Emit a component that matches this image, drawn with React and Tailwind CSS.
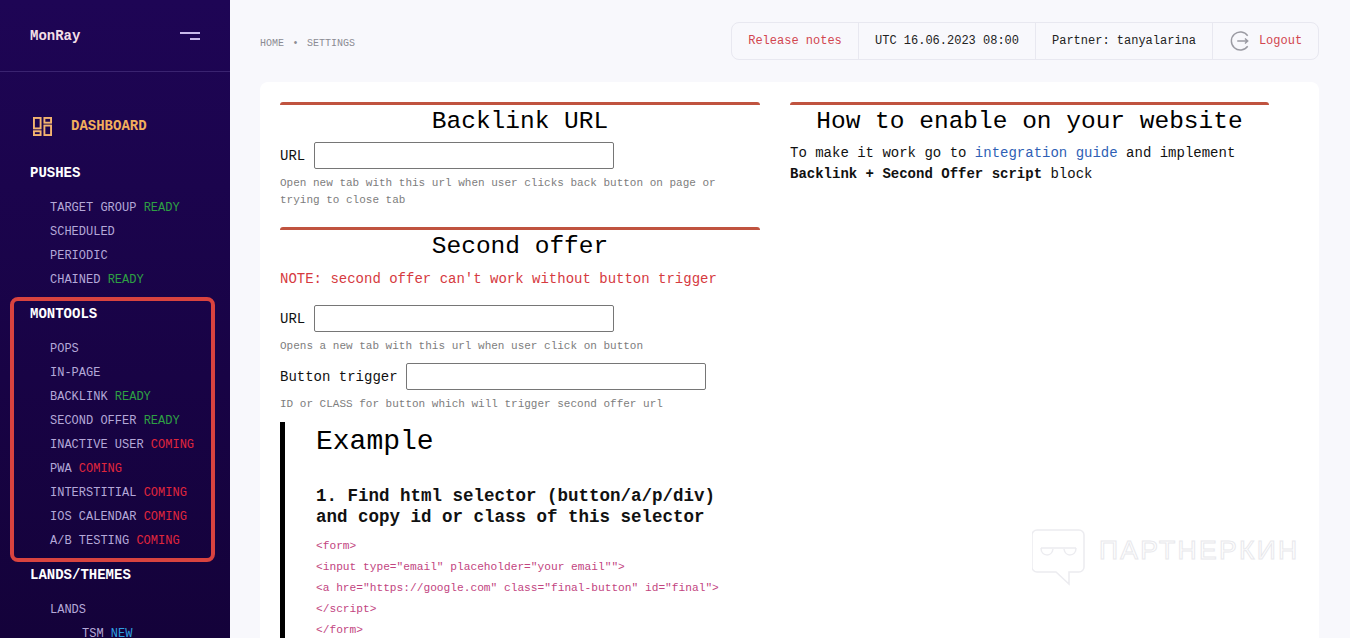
import React from "react";

const mono = "font-['Liberation_Mono',monospace]";

// sidebar groups
const PUSHES = [
    { name: "TARGET GROUP", tag: "READY" },
    { name: "SCHEDULED" },
    { name: "PERIODIC" },
    { name: "CHAINED", tag: "READY" },
];

const MONTOOLS = [
    { name: "POPS" },
    { name: "IN-PAGE" },
    { name: "BACKLINK", tag: "READY" },
    { name: "SECOND OFFER", tag: "READY" },
    { name: "INACTIVE USER", tag: "COMING" },
    { name: "PWA", tag: "COMING" },
    { name: "INTERSTITIAL", tag: "COMING" },
    { name: "IOS CALENDAR", tag: "COMING" },
    { name: "A/B TESTING", tag: "COMING" },
];

const CODE = [
    "<form>",
    '<input type="email" placeholder="your email"">',
    '<a hre="https://google.com" class="final-button" id="final">',
    "</script>",
    "</form>",
];

function Tag({ tag }) {
    if (tag === "READY") return <span className="text-[#2ea043]">READY</span>;
    if (tag === "NEW") return <span className="text-[#2f9fe0]">NEW</span>;
    return <span className="text-[#e0263c]">COMING</span>;
}

function NavItem({ item }) {
    return (
        <div className="h-6 leading-6 text-xs text-[#b4a8d8] whitespace-pre pl-5">
            {item.name}
            {item.tag && " "}
            {item.tag && <Tag tag={item.tag} />}
        </div>
    );
}

function DashboardIcon() {
    return (
        <svg width="19" height="19" viewBox="0 0 20 20" fill="none" stroke="#f3b36f" strokeWidth="2">
            <rect x="1" y="1" width="7" height="11" />
            <rect x="12" y="1" width="7" height="5" />
            <rect x="1" y="15" width="7" height="4" />
            <rect x="12" y="9" width="7" height="10" />
        </svg>
    );
}

function LogoutIcon() {
    return (
        <svg width="22" height="22" viewBox="0 0 20 20" fill="none" stroke="#9a9aa2" strokeWidth="1.3">
            <path d="M17 5.2A8.2 8.2 0 1 0 17 14.8" />
            <path d="M7.5 10H17M14.5 7.8 17 10l-2.5 2.2" />
        </svg>
    );
}

function Sidebar() {
    return (
        <aside className="w-[230px] shrink-0 h-full overflow-hidden bg-gradient-to-b from-[#1e0555] to-[#14023a]">
            <div className="h-[72px] border-b border-[#3a2370] pl-[30px] pr-[30px] flex items-center justify-between">
                <span className="text-sm text-[#f3dfe6] font-semibold">MonRay</span>
                <div className="flex flex-col items-end gap-1">
                    <div className="w-5 h-0.5 bg-[#c9b8ea]" />
                    <div className="w-[10px] h-0.5 bg-[#c9b8ea]" />
                </div>
            </div>

            <div className="mt-[42px] pl-[33px] flex items-center gap-[19px] h-6">
                <DashboardIcon />
                <span className="text-sm font-bold text-[#f2ae5c]">DASHBOARD</span>
            </div>

            <div className="pl-[30px] mt-[23px]">
                <div className="h-6 leading-6 text-sm font-bold text-white">PUSHES</div>
                <div className="mt-[11px]">
                    {PUSHES.map((item) => <NavItem key={item.name} item={item} />)}
                </div>
            </div>

            <div className="ml-[10px] w-[205px] mt-[5px] border-4 border-[#d9433f] rounded-lg pl-4 pt-px pb-[5px]">
                <div className="h-6 leading-6 text-sm font-bold text-white">MONTOOLS</div>
                <div className="mt-[11px]">
                    {MONTOOLS.map((item) => <NavItem key={item.name} item={item} />)}
                </div>
            </div>

            <div className="pl-[30px] mt-[1px]">
                <div className="h-6 leading-6 text-sm font-bold text-white">LANDS/THEMES</div>
                <div className="mt-[11px]">
                    <NavItem item={{ name: "LANDS" }} />
                    <div className="pl-[32px]">
                        <NavItem item={{ name: "TSM", tag: "NEW" }} />
                    </div>
                </div>
            </div>
        </aside>
    );
}

function TopBar() {
    return (
        <div className="flex items-center justify-between h-[38px]">
            <div className="pt-1 text-[10px] text-[#8b8b93]">
                HOME<span className="px-[8.5px]">•</span>SETTINGS
            </div>
            <div className="flex h-[38px] items-stretch text-xs border border-[#e8e8f0] rounded-lg">
                <div className="w-[127px] flex items-center justify-center border-r border-[#e8e8f0] text-[#d2454f]">Release notes</div>
                <div className="w-[177px] flex items-center justify-center border-r border-[#e8e8f0] text-[#222]">UTC 16.06.2023 08:00</div>
                <div className="w-[177px] flex items-center justify-center border-r border-[#e8e8f0] text-[#222]">Partner: tanyalarina</div>
                <div className="w-[105px] flex items-center justify-center gap-2 text-[#d2454f]">
                    <LogoutIcon />
                    <span>Logout</span>
                </div>
            </div>
        </div>
    );
}

function SectionTitle({ children }) {
    return (
        <h2 className="border-t-[3px] border-[#c0533f] rounded-t-[3px] text-[24.5px] leading-[34px] text-black text-center">
            {children}
        </h2>
    );
}

function Field({ label, className }) {
    return (
        <div className={`flex items-center gap-[8.4px] ${className}`}>
            <span className="text-sm text-[#111]">{label}</span>
            <input className="w-[300px] h-[27px] border border-[#767676] rounded-[2px] bg-white" />
        </div>
    );
}

function Hint({ children, className }) {
    return <p className={`text-[11px] leading-[17px] text-[#7d7d7d] ${className}`}>{children}</p>;
}

function Watermark() {
    return (
        <div className="absolute left-[772px] top-[447px] flex items-start gap-[13px] pointer-events-none">
            <svg width="54" height="58" viewBox="0 0 54 58" fill="none" stroke="#ececf0" strokeWidth="1.5">
                <path d="M5 1h42a5 5 0 0 1 5 5v32a5 5 0 0 1-5 5H37v12L24 43H5a5 5 0 0 1-5-5V6a5 5 0 0 1 5-5Z" />
                <path d="M9 19h35M9 19c0 9 11 9 12 1M32 20c1 8 12 8 12-1" />
            </svg>
            <span className="mt-[6px] text-[26.5px] leading-[30px] font-['Liberation_Sans',sans-serif] tracking-[2.3px] text-transparent [-webkit-text-stroke:1px_#e8e8ec]">ПАРТНЕРКИН</span>
        </div>
    );
}

export default function App() {
    return (
        <div className={`flex w-full h-screen overflow-hidden bg-[#f8f8fc] ${mono}`}>
            <Sidebar />
            <main className="flex-1 min-w-0 pl-[30px] pr-[31px] pt-[22px]">
                <TopBar />
                <div className="relative mt-[22px] h-[600px] bg-white rounded-lg pt-5 pl-5 flex gap-[30px]">
                    {/* левая колонка */}
                    <div className="w-[480px] shrink-0">
                        <SectionTitle>Backlink URL</SectionTitle>
                        <Field label="URL" className="mt-[3px]" />
                        <Hint className="mt-[6px]">Open new tab with this url when user clicks back button on page or trying to close tab</Hint>

                        <div className="mt-[18px]">
                            <SectionTitle>Second offer</SectionTitle>
                        </div>
                        <p className="mt-[5px] text-sm leading-[21px] text-[#d63a3f]">NOTE: second offer can't work without button trigger</p>
                        <Field label="URL" className="mt-[15px]" />
                        <Hint className="mt-[6px]">Opens a new tab with this url when user click on button</Hint>
                        <Field label="Button trigger" className="mt-2" />
                        <Hint className="mt-[6px]">ID or CLASS for button which will trigger second offer url</Hint>

                        <div className="mt-[9px] border-l-[5px] border-black pl-[31px] pt-0.5 pb-10">
                            <h3 className="text-[28px] leading-[36px] text-black">Example</h3>
                            <h4 className="mt-[26px] text-[17.5px] leading-[21px] font-bold text-[#111]">
                                1. Find html selector (button/a/p/div)
                                <br />
                                and copy id or class of this selector
                            </h4>
                            <div className="mt-2">
                                {CODE.map((line) => (
                                    <div key={line} className="h-[21px] leading-[21px] text-[11.2px] text-[#c2457f] whitespace-pre">{line}</div>
                                ))}
                            </div>
                        </div>
                    </div>

                    {/* правая колонка */}
                    <div className="w-[479px] shrink-0">
                        <SectionTitle>How to enable on your website</SectionTitle>
                        <p className="mt-1 text-sm leading-[21px] text-[#111]">
                            To make it work go to <span className="text-[#2f5fb5]">integration guide</span> and implement
                            <br />
                            <b>Backlink + Second Offer script</b> block
                        </p>
                    </div>

                    <Watermark />
                </div>
            </main>
        </div>
    );
}
